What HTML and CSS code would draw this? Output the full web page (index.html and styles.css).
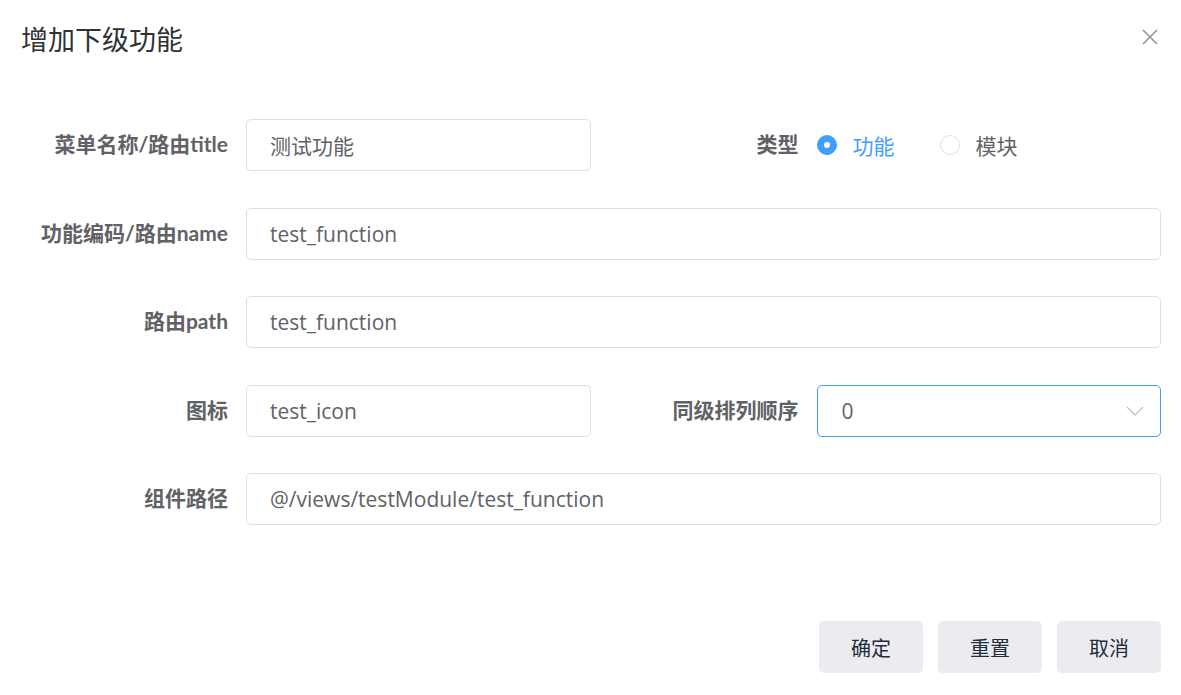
FILE: index.html
```html
<!DOCTYPE html>
<html lang="zh-CN">
<head>
    <meta charset="UTF-8">
    <meta name="viewport" content="width=device-width, initial-scale=1.0">
    <title>增加下级功能</title>
    <link rel="stylesheet" href="styles.css">
</head>
<body>
    <div class="dialog">
        <div class="dialog-header">
            <span class="dialog-title">增加下级功能</span>
            <button class="close-btn" aria-label="关闭">
                <svg width="16" height="16" viewBox="0 0 16 16">
                    <path d="M1 1 L15 15 M15 1 L1 15" stroke="#909399" stroke-width="1.6" fill="none"/>
                </svg>
            </button>
        </div>

        <form class="menu-form">
            <div class="form-row">
                <div class="form-item">
                    <label class="form-label">菜单名称/路由title</label>
                    <div class="form-control"><input class="text-input" type="text" value="测试功能"></div>
                </div>
                <div class="form-item">
                    <label class="form-label">类型</label>
                    <div class="form-control radio-group">
                        <label class="radio checked"><span class="radio-dot"></span><span>功能</span></label>
                        <label class="radio"><span class="radio-dot"></span><span>模块</span></label>
                    </div>
                </div>
            </div>

            <div class="form-row">
                <div class="form-item">
                    <label class="form-label">功能编码/路由name</label>
                    <div class="form-control"><input class="text-input" type="text" value="test_function"></div>
                </div>
            </div>

            <div class="form-row">
                <div class="form-item">
                    <label class="form-label">路由path</label>
                    <div class="form-control"><input class="text-input" type="text" value="test_function"></div>
                </div>
            </div>

            <div class="form-row">
                <div class="form-item">
                    <label class="form-label">图标</label>
                    <div class="form-control"><input class="text-input" type="text" value="test_icon"></div>
                </div>
                <div class="form-item">
                    <label class="form-label">同级排列顺序</label>
                    <div class="form-control">
                        <div class="select is-focus">
                            <span class="select-value">0</span>
                            <svg class="select-arrow" width="18" height="10" viewBox="0 0 18 10">
                                <path d="M1 1 L9 9 L17 1" stroke="#c0c4cc" stroke-width="1.4" fill="none"/>
                            </svg>
                        </div>
                    </div>
                </div>
            </div>

            <div class="form-row">
                <div class="form-item">
                    <label class="form-label">组件路径</label>
                    <div class="form-control"><input class="text-input" type="text" value="@/views/testModule/test_function"></div>
                </div>
            </div>
        </form>

        <div class="dialog-footer">
            <button class="btn">确定</button>
            <button class="btn">重置</button>
            <button class="btn">取消</button>
        </div>
    </div>
</body>
</html>
```

FILE: styles.css
```css
body {
    margin: 0;
    background-color: #fff;
    font-family: "Open Sans", "Noto Sans CJK SC", sans-serif;
}
.dialog {
    width: 1181px;
    height: 695px;
    box-sizing: border-box;
    padding: 20px 20px 0 20px;
}
.dialog-header {
    display: flex;
    justify-content: space-between;
    align-items: center;
    height: 40px;
}
.dialog-title {
    padding-left: 1px;
    font-size: 27px;
    line-height: 40px;
    color: #303133;
}
.close-btn {
    margin-right: 3px;
    padding: 0;
    border: none;
    background: none;
    width: 16px;
    height: 16px;
    margin-top: -6px;
    cursor: pointer;
}
.menu-form {
    margin-top: 59px;
    display: flex;
    flex-direction: column;
    gap: 36.5px;
}
.form-row {
    display: flex;
}
.form-item {
    flex: 1;
    display: flex;
    align-items: center;
    height: 52px;
}
.form-label {
    width: 226px;
    flex-shrink: 0;
    box-sizing: border-box;
    padding-right: 18px;
    padding-bottom: 2px;
    text-align: right;
    font-family: Lato, "Noto Sans CJK SC", sans-serif;
    font-size: 21px;
    font-weight: bold;
    color: #606266;
    line-height: 50px;
}
.form-control {
    flex: 1;
    height: 52px;
}
.text-input {
    width: 100%;
    height: 52px;
    box-sizing: border-box;
    padding: 0 23px;
    border: 1px solid #dcdfe6;
    border-radius: 5px;
    font-family: inherit;
    font-size: 21px;
    color: #606266;
    outline: none;
}
.radio-group {
    display: flex;
    align-items: center;
    gap: 45px;
}
.radio {
    display: flex;
    align-items: center;
    gap: 16px;
    font-size: 21px;
    color: #606266;
    cursor: pointer;
}
.radio-dot {
    width: 20px;
    height: 20px;
    box-sizing: border-box;
    border: 1px solid #dcdfe6;
    border-radius: 50%;
    background-color: #fff;
    position: relative;
}
.radio.checked {
    color: #409eff;
}
.radio.checked .radio-dot {
    border-color: #409eff;
    background-color: #409eff;
}
.radio.checked .radio-dot::after {
    content: "";
    position: absolute;
    left: 50%;
    top: 50%;
    width: 6px;
    height: 6px;
    margin: -3px 0 0 -3px;
    border-radius: 50%;
    background-color: #fff;
}
.select {
    display: flex;
    align-items: center;
    justify-content: space-between;
    height: 52px;
    box-sizing: border-box;
    padding: 0 16px 0 24px;
    border: 1px solid #dcdfe6;
    border-radius: 5px;
    font-size: 21px;
    color: #606266;
}
.select.is-focus {
    border-color: #409eff;
}
.dialog-footer {
    margin-top: 96px;
    display: flex;
    justify-content: flex-end;
    gap: 15px;
}
.btn {
    width: 104px;
    height: 52px;
    border: none;
    border-radius: 5px;
    background-color: #ebebf0;
    font-family: inherit;
    font-size: 20px;
    color: #1f2d3d;
    cursor: pointer;
}
```
